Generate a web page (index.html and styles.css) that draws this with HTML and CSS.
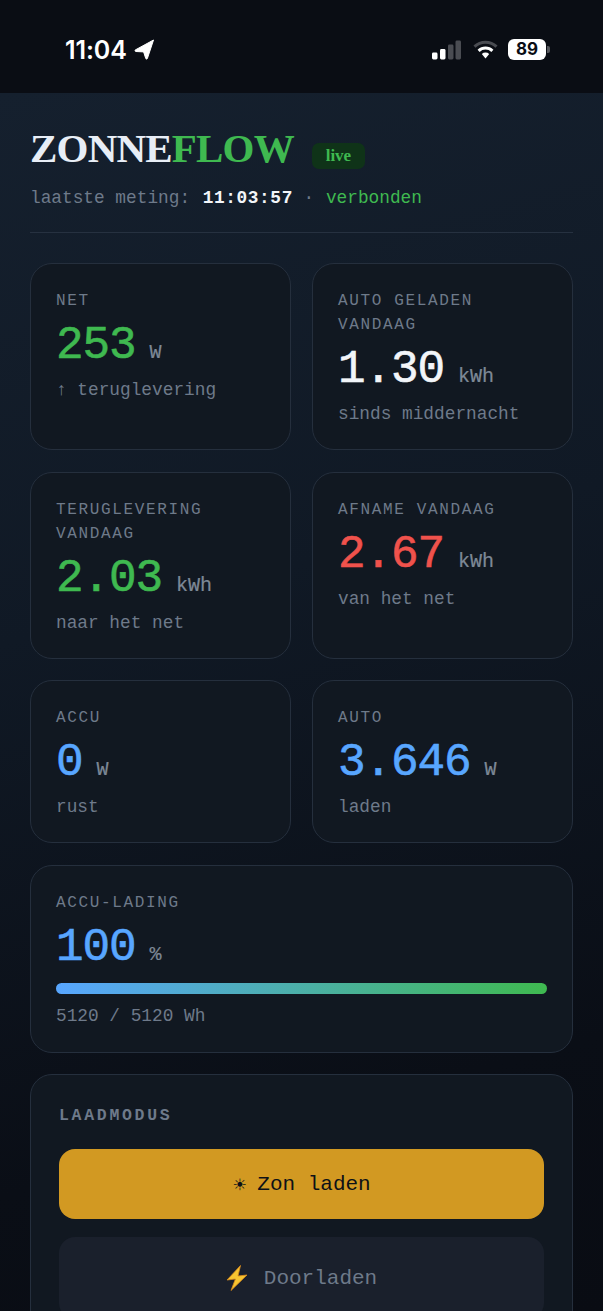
FILE: index.html
```html
<!DOCTYPE html>
<html lang="nl">
<head>
<meta charset="utf-8">
<title>ZonneFlow</title>
<link rel="stylesheet" href="styles.css">
</head>
<body>
<div class="status">
  <div class="status-left">
    <span class="clock">11:04</span>
    <svg class="loc" width="21" height="21" viewBox="0 0 21 21"><path d="M19.5 1 L1.2 11 Q0.6 12.4 2 12.5 L9.6 12.9 L11.8 19.6 Q12.8 20.8 13.4 19.4 Z" fill="#fff" stroke="#fff" stroke-linejoin="round"/></svg>
  </div>
  <div class="status-right">
    <svg class="signal" width="29" height="20" viewBox="0 0 29 20">
      <rect x="0" y="12.5" width="5.5" height="7" rx="1.4" fill="#fff"/>
      <rect x="8" y="9" width="5.5" height="10.5" rx="1.4" fill="#fff"/>
      <rect x="16" y="4.5" width="5.5" height="15" rx="1.4" fill="#4a4c52"/>
      <rect x="23.5" y="0.5" width="5.5" height="19" rx="1.4" fill="#4a4c52"/>
    </svg>
    <svg class="wifi" width="25" height="20" viewBox="0 0 25 20">
      <path d="M1.5 6.6 A16 16 0 0 1 23.5 6.6" fill="none" stroke="#4a4c52" stroke-width="3"/>
      <path d="M5.6 10.8 A10 10 0 0 1 19.4 10.8" fill="none" stroke="#fff" stroke-width="3"/>
      <path d="M8.8 14 L12.5 18.4 L16.2 14 A5.4 5.4 0 0 0 8.8 14 Z" fill="#fff"/>
    </svg>
    <div class="battery"><span class="battery-level">89</span><span class="battery-cap"></span></div>
  </div>
</div>

<main class="page">
  <header class="head">
    <div class="brand">
      <h1 class="logo">ZONNE<span class="logo-accent">FLOW</span></h1>
      <span class="live">live</span>
    </div>
    <p class="meta">laatste meting: <strong class="meta-time">11:03:57</strong> <span class="meta-dot">·</span> <span class="meta-ok">verbonden</span></p>
  </header>

  <section class="grid">
    <article class="card">
      <div class="label">NET</div>
      <div class="value green">253<span class="unit">W</span></div>
      <div class="sub">↑ teruglevering</div>
    </article>
    <article class="card">
      <div class="label">AUTO GELADEN VANDAAG</div>
      <div class="value white">1.30<span class="unit">kWh</span></div>
      <div class="sub">sinds middernacht</div>
    </article>
    <article class="card">
      <div class="label">TERUGLEVERING VANDAAG</div>
      <div class="value green">2.03<span class="unit">kWh</span></div>
      <div class="sub">naar het net</div>
    </article>
    <article class="card">
      <div class="label">AFNAME VANDAAG</div>
      <div class="value red">2.67<span class="unit">kWh</span></div>
      <div class="sub">van het net</div>
    </article>
    <article class="card">
      <div class="label">ACCU</div>
      <div class="value blue">0<span class="unit">W</span></div>
      <div class="sub">rust</div>
    </article>
    <article class="card">
      <div class="label">AUTO</div>
      <div class="value blue">3.646<span class="unit">W</span></div>
      <div class="sub">laden</div>
    </article>
    <article class="card wide">
      <div class="label">ACCU-LADING</div>
      <div class="value blue">100<span class="unit">%</span></div>
      <div class="bar"><div class="bar-fill"></div></div>
      <div class="sub bar-sub">5120 / 5120 Wh</div>
    </article>
    <article class="card wide modes">
      <div class="modes-title">LAADMODUS</div>
      <button class="mode active"><span class="sun">☀</span><span>Zon laden</span></button>
      <button class="mode mode-tall"><svg class="bolt" width="22" height="26" viewBox="0 0 22 26"><path d="M14.5 0.5 L1 15 L9.4 14 L5 25.5 L21 10 L12 11 Z" fill="#f7c531" stroke="#d98a1c" stroke-width="0.8" stroke-linejoin="round"/></svg><span>Doorladen</span></button>
    </article>
  </section>
</main>
</body>
</html>
```
FILE: styles.css
```css
* { box-sizing: border-box; }
html, body { margin: 0; height: 1311px; overflow: hidden; }
body {
  background: #0a0d14;
  font-family: "Liberation Mono", "DejaVu Sans Mono", monospace;
  color: #e8eef6;
}
.status {
  height: 93px;
  background: #0a0d14;
  display: flex;
  justify-content: space-between;
  align-items: center;
  padding: 6px 53px 0 65px;
}
.status-left, .status-right { display: flex; align-items: center; }
.clock {
  font: 600 25px "Inter", "Liberation Sans", sans-serif;
  letter-spacing: -0.1px;
  color: #fff;
}
.loc { margin-left: 7px; }
.signal { margin-right: 12px; }
.wifi { margin-right: 10px; }
.battery { display: flex; align-items: center; }
.battery-level {
  width: 38px;
  height: 21px;
  border-radius: 6px;
  background: #fff;
  color: #0a0d14;
  font: 700 17px/21px "Inter", "Liberation Sans", sans-serif;
  text-align: center;
}
.battery-cap {
  width: 3px;
  height: 7px;
  margin-left: 1px;
  border-radius: 0 2px 2px 0;
  background: #55575c;
}
.page {
  height: 1218px;
  padding: 0 30px;
  background: linear-gradient(165deg, #15202e 0%, #101925 40%, #0a0e16 80%, #090c13 100%);
}
.head {
  padding-top: 33px;
  padding-bottom: 20px;
  border-bottom: 1px solid #263140;
  margin-bottom: 30px;
}
.brand { display: flex; align-items: center; height: 44px; }
.logo {
  margin: 0;
  font: 700 41px/44px "Liberation Serif", serif;
  letter-spacing: -0.8px;
  color: #e8eef6;
}
.logo-accent { color: #3fb950; }
.live {
  margin: 15px 0 0 18px;
  width: 53px;
  height: 26px;
  border-radius: 7px;
  background: #0f3318;
  color: #3fb950;
  font: 700 17px/26px "Liberation Serif", serif;
  text-align: center;
}
.meta {
  margin: 15px 0 0;
  font-size: 17.8px;
  line-height: 27px;
  color: #6e7a8a;
}
.meta-time { margin-left: 2px; letter-spacing: 0.6px; color: #f2f5f9; font-weight: 700; }
.meta-dot { color: #6e7a8a; }
.meta-ok { margin-left: 1px; color: #3fb950; }
.grid {
  display: grid;
  grid-template-columns: 261px 261px;
  column-gap: 21px;
  row-gap: 21.5px;
}
.card {
  padding: 25px 25px 21px;
  background: #111821;
  border: 1px solid #252f3d;
  border-radius: 22px;
}
.wide { grid-column: 1 / -1; }
.label {
  font-size: 16px;
  line-height: 24px;
  letter-spacing: 1.65px;
  color: #6e7a8a;
}
.value {
  margin-top: 8px;
  font-size: 46px;
  line-height: 50px;
  letter-spacing: -1.1px;
  -webkit-text-stroke: 0.6px currentColor;
  white-space: nowrap;
}
.unit {
  margin-left: 14px;
  font-size: 20px;
  line-height: 1;
  letter-spacing: 0;
  -webkit-text-stroke: 0.2px currentColor;
  color: #7d8896;
}
.green { color: #3fb950; }
.white { color: #f2f5f9; }
.red { color: #f0524c; }
.blue { color: #58a6ff; }
.sub {
  margin-top: 6px;
  font-size: 17.8px;
  line-height: 27px;
  color: #6e7a8a;
}
.bar {
  margin-top: 10px;
  height: 11px;
  border-radius: 6px;
  background: #1a222e;
  overflow: hidden;
}
.bar-fill {
  height: 100%;
  background: linear-gradient(90deg, #58a6ff, #3fb950);
}
.bar-sub { margin-top: 9px; margin-bottom: 1px; }
.modes { padding: 27px 28px 30px; }
.modes-title {
  font-size: 16.5px;
  line-height: 28px;
  font-weight: 700;
  letter-spacing: 2.7px;
  color: #6e7a8a;
  margin-bottom: 19px;
}
.mode {
  display: flex;
  align-items: center;
  justify-content: center;
  width: 100%;
  height: 70px;
  margin-bottom: 18px;
  border: 0;
  border-radius: 16px;
  background: #1a202c;
  color: #6e7a8a;
  font: 400 21px "Liberation Mono", monospace;
}
.mode-tall { height: 82px; }
.mode.active { background: #d29922; color: #0d1117; }
.sun { width: 15px; margin-right: 10px; font-family: "DejaVu Sans", sans-serif; font-size: 16px; text-align: center; }
.bolt { margin-right: 16px; }
```
